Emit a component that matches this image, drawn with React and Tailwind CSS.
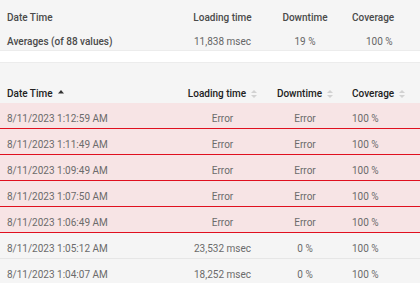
import React from "react";

const SortBoth = () => (
  <svg width="6" height="8" viewBox="0 0 6 8" className="ml-[5px] shrink-0">
    <path d="M3 0 L6 3 L0 3 Z" fill="#d2d2d2" />
    <path d="M0 5 L6 5 L3 8 Z" fill="#d2d2d2" />
  </svg>
);
const SortUp = () => (
  <svg width="6" height="4" viewBox="0 0 6 4" className="ml-[5px] shrink-0 mb-[6px]">
    <path d="M3 0 L6 3.5 L0 3.5 Z" fill="#333" />
  </svg>
);

const rows = [
  ["8/11/2023 1:12:59 AM", "Error", "Error", "100 %", true],
  ["8/11/2023 1:11:49 AM", "Error", "Error", "100 %", true],
  ["8/11/2023 1:09:49 AM", "Error", "Error", "100 %", true],
  ["8/11/2023 1:07:50 AM", "Error", "Error", "100 %", true],
  ["8/11/2023 1:06:49 AM", "Error", "Error", "100 %", true],
  ["8/11/2023 1:05:12 AM", "23,532 msec", "0 %", "100 %", false],
  ["8/11/2023 1:04:07 AM", "18,252 msec", "0 %", "100 %", false],
];

export default function App() {
  return (
    <div className="w-[420px] h-[283px] overflow-hidden bg-white text-[10px] leading-[12px] font-['Roboto',sans-serif]">
      <div className="bg-[#f5f5f5] h-[50px] text-[#4a4a4a] font-medium">
        <div className="grid grid-cols-[180px_85px_80px_75px] items-center h-[34px] pt-[1px]">
          <div className="pl-[7px]">Date Time</div>
          <div className="text-center">Loading time</div>
          <div className="text-center">Downtime</div>
          <div className="pl-[7px]">Coverage</div>
        </div>
        <div className="grid grid-cols-[180px_85px_80px_75px] items-center h-[16px]">
          <div className="pl-[7px]">Averages (of 88 values)</div>
          <div className="text-center font-normal text-[#666]">11,838 msec</div>
          <div className="text-center font-normal text-[#666]">19 %</div>
          <div className="pl-[21px] font-normal text-[#666]">100 %</div>
        </div>
      </div>
      <div className="h-px bg-[#ececec]" />
      <div className="h-[11px] bg-white" />
      <div className="h-px bg-[#ececec]" />
      <div className="bg-[#f5f5f5]">
        <div className="grid grid-cols-[180px_85px_80px_75px] items-end h-[40px] pb-[3px] text-[#222] font-medium">
          <div className="pl-[7px] flex items-end">Date Time<SortUp /></div>
          <div className="flex items-center justify-center">Loading time<SortBoth /></div>
          <div className="flex items-center justify-center">Downtime<SortBoth /></div>
          <div className="flex items-center pl-[7px]">Coverage<SortBoth /></div>
        </div>
        {rows.map((r, i) => (
          <div key={i} className={r[4] ? "bg-[#f7e4e5]" : ""}>
            <div className="grid grid-cols-[180px_85px_80px_75px] items-center h-[25px] pt-[7px] text-[#6b6b6b]">
              <div className="pl-[7px]">{r[0]}</div>
              <div className="text-center">{r[1]}</div>
              <div className="text-center">{r[2]}</div>
              <div className="pl-[7px]">{r[3]}</div>
            </div>
            <div className={r[4] ? "h-px bg-[#e0101f]" : "h-px bg-[#e6e6e6]"} />
          </div>
        ))}
      </div>
    </div>
  );
}
